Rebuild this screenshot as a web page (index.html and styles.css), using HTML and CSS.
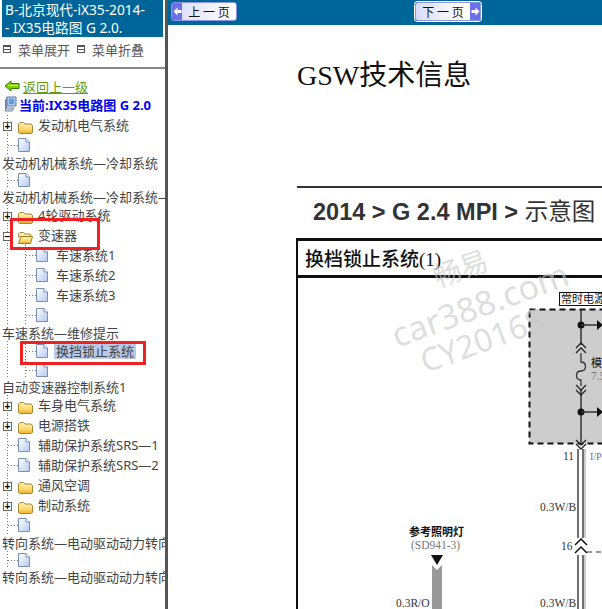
FILE: index.html
```html
<!DOCTYPE html>
<html lang="zh-CN">
<head>
    <meta charset="UTF-8">
    <title>IX35电路图 G 2.0</title>
    <link rel="stylesheet" href="styles.css">
</head>
<body>
    <svg class="sprite" width="0" height="0">
        <defs>
            <linearGradient id="folderfill" x1="0" y1="0" x2="0" y2="1">
                <stop offset="0" stop-color="#fff2b8"/>
                <stop offset="0.6" stop-color="#fbd96e"/>
                <stop offset="1" stop-color="#eeb030"/>
            </linearGradient>
            <linearGradient id="docfill" x1="0" y1="0" x2="1" y2="1">
                <stop offset="0" stop-color="#ffffff"/>
                <stop offset="1" stop-color="#b4caf0"/>
            </linearGradient>
        </defs>
        <symbol id="folder" viewBox="0 0 15 12">
            <path d="M0.5 2 L2 0.5 H5.5 L7 2 H13 L14.5 3.5 V10.5 L13.5 11.5 H1.5 L0.5 10.5 Z" fill="url(#folderfill)" stroke="#a98632"/>
        </symbol>
        <symbol id="folder-open" viewBox="0 0 15 12">
            <path d="M0.5 2 L2 0.5 H5.5 L7 2 H12.5 V5 H0.5 Z" fill="#fdf0b0" stroke="#a98632"/>
            <path d="M0.5 11.5 L3 4.5 H14.5 L12.5 11.5 Z" fill="url(#folderfill)" stroke="#a07c28"/>
        </symbol>
        <symbol id="doc" viewBox="0 0 12 14">
            <path d="M0.5 0.5 H8 L11.5 4 V13.5 H0.5 Z" fill="url(#docfill)" stroke="#7a8fb8"/>
            <path d="M8 0.5 V4 H11.5" fill="#fff" stroke="#7a8fb8"/>
        </symbol>
    </svg>

    <div class="page">
        <aside class="side">
            <div class="side-title">B-北京现代-iX35-2014-<br>- IX35电路图 G 2.0.</div>
            <div class="menu-tools">
                <span class="tool-icon"></span><span class="tool-text">菜单展开</span>
                <span class="tool-icon"></span><span class="tool-text">菜单折叠</span>
            </div>
            <div class="back">
                <svg class="back-icon" width="16" height="12" viewBox="0 0 16 12">
                    <path d="M1 6 L7 1 V3.5 H15 V8.5 H7 V11 Z" fill="#86d000" stroke="#2f7f00"/>
                    <path d="M4.5 5.5 H14" stroke="#e4f89a"/>
                </svg>
                <a href="#" class="back-link">返回上一级</a>
            </div>
            <div class="current">
                <svg class="current-icon" width="15" height="16" viewBox="0 0 15 16">
                    <path d="M4 1 H13 V10 H4 Z" fill="#a8c8f0" stroke="#5a7fb0"/>
                    <path d="M6 3 H11 V8 H6 Z" fill="#5f9be0"/>
                    <path d="M2 4 L4 1 V12 L2 15 Z" fill="#6b86aa"/>
                    <path d="M3 12 H11 L9 15 H2 Z" fill="#c4ccd8" stroke="#7a8799"/>
                </svg>
                <span>当前:IX35电路图 G 2.0</span>
            </div>

            <div class="tree">
                <div class="row"><span class="stem"><i class="box">+</i></span><svg class="ico-folder"><use href="#folder"/></svg><span class="label">发动机电气系统</span></div>
                <div class="row"><span class="stem elbow"></span><svg class="ico-doc"><use href="#doc"/></svg></div>
                <div class="row-text">发动机机械系统—冷却系统</div>
                <div class="row short"><span class="stem elbow"></span><svg class="ico-doc"><use href="#doc"/></svg></div>
                <div class="row-text">发动机机械系统—冷却系统—</div>
                <div class="row"><span class="stem"><i class="box">+</i></span><svg class="ico-folder"><use href="#folder"/></svg><span class="label">4轮驱动系统</span></div>
                <div class="row"><span class="stem"><i class="box">−</i></span><svg class="ico-folder"><use href="#folder-open"/></svg><span class="label">变速器</span></div>
                <div class="row"><span class="stem"></span><span class="stem elbow"></span><svg class="ico-doc"><use href="#doc"/></svg><span class="label">车速系统1</span></div>
                <div class="row"><span class="stem"></span><span class="stem elbow"></span><svg class="ico-doc"><use href="#doc"/></svg><span class="label">车速系统2</span></div>
                <div class="row"><span class="stem"></span><span class="stem elbow"></span><svg class="ico-doc"><use href="#doc"/></svg><span class="label">车速系统3</span></div>
                <div class="row"><span class="stem"></span><span class="stem elbow"></span><svg class="ico-doc"><use href="#doc"/></svg></div>
                <div class="row-text">车速系统—维修提示</div>
                <div class="row"><span class="stem"></span><span class="stem elbow"></span><svg class="ico-doc"><use href="#doc"/></svg><span class="label selected">换挡锁止系统</span></div>
                <div class="row short"><span class="stem"></span><span class="stem elbow"></span><svg class="ico-doc"><use href="#doc"/></svg></div>
                <div class="row-text">自动变速器控制系统1</div>
                <div class="row"><span class="stem"><i class="box">+</i></span><svg class="ico-folder"><use href="#folder"/></svg><span class="label">车身电气系统</span></div>
                <div class="row"><span class="stem"><i class="box">+</i></span><svg class="ico-folder"><use href="#folder"/></svg><span class="label">电源搭铁</span></div>
                <div class="row"><span class="stem elbow"></span><svg class="ico-doc"><use href="#doc"/></svg><span class="label">辅助保护系统SRS—1</span></div>
                <div class="row"><span class="stem elbow"></span><svg class="ico-doc"><use href="#doc"/></svg><span class="label">辅助保护系统SRS—2</span></div>
                <div class="row"><span class="stem"><i class="box">+</i></span><svg class="ico-folder"><use href="#folder"/></svg><span class="label">通风空调</span></div>
                <div class="row"><span class="stem"><i class="box">+</i></span><svg class="ico-folder"><use href="#folder"/></svg><span class="label">制动系统</span></div>
                <div class="row"><span class="stem elbow"></span><svg class="ico-doc"><use href="#doc"/></svg></div>
                <div class="row-text">转向系统—电动驱动动力转向系统</div>
                <div class="row short"><span class="stem elbow"></span><svg class="ico-doc"><use href="#doc"/></svg></div>
                <div class="row-text">转向系统—电动驱动动力转向系统</div>
            </div>

            <!-- red annotation boxes drawn on the screenshot -->
            <div class="mark mark-folder"></div>
            <div class="mark mark-item"></div>
        </aside>

        <main class="main">
            <div class="pager">
                <a href="#" class="page-btn prev">
                    <span class="btn-arrow"><svg width="9" height="9" viewBox="0 0 9 9"><path d="M0.5 4.5 L4.5 0.5 V3 H8.5 V6 H4.5 V8.5 Z" fill="#fff"/></svg></span>
                    <span class="btn-text">上 一 页</span>
                </a>
                <a href="#" class="page-btn next">
                    <span class="btn-text">下 一 页</span>
                    <span class="btn-arrow"><svg width="9" height="9" viewBox="0 0 9 9"><path d="M8.5 4.5 L4.5 0.5 V3 H0.5 V6 H4.5 V8.5 Z" fill="#fff"/></svg></span>
                </a>
            </div>

            <div class="doc">
                <h1 class="doc-title">GSW技术信息</h1>
                <div class="doc-rule"></div>
                <div class="doc-path">2014 &gt; G 2.4 MPI &gt; <span class="path-cn">示意图</span> :</div>
                <div class="sheet">
                    <div class="sheet-title">换档锁止系统<span class="sheet-num">(1)</span></div>
                    <svg class="diagram" width="305" height="331" viewBox="297 278 305 331">
                        <!-- fuse box -->
                        <rect x="529.5" y="309.5" width="90" height="134" fill="#cdcdcd" stroke="#111" stroke-width="2" stroke-dasharray="6 4"/>
                        <rect x="559.5" y="292.5" width="60" height="13" fill="#fff" stroke="#111"/>
                        <text x="561" y="303" class="d-cn">常时电源</text>
                        <path d="M581 310 V345 M581 390 V442" stroke="#333" stroke-width="1.5" fill="none"/>
                        <circle cx="581" cy="325" r="3.5" fill="#111"/>
                        <circle cx="581" cy="412" r="3.5" fill="#111"/>
                        <path d="M581 325 H597 M581 412 H597" stroke="#333" stroke-width="1.5"/>
                        <path d="M597 320 L603 325 L597 330 Z M597 407 L603 412 L597 417 Z" fill="#111"/>
                        <path d="M576 348 L581 343 L586 348 M576 353 L581 348 L586 353" stroke="#222" stroke-width="1.3" fill="none"/>
                        <path d="M581 353 V362 C587 362 587 371 581 371 C575 371 575 380 581 380 V386" stroke="#333" stroke-width="1.3" fill="none"/>
                        <path d="M576 385 L581 390 L586 385 M576 390 L581 395 L586 390" stroke="#222" stroke-width="1.3" fill="none"/>
                        <text x="591" y="367" class="d-cn">模</text>
                        <text x="591" y="380" class="d-num d-grey">7.5</text>
                        <path d="M576 440 L581 445 L586 440 M576 444 L581 449 L586 444" stroke="#222" stroke-width="1.3" fill="none"/>
                        <!-- wire down -->
                        <path d="M578 449 V538 M583 449 V538 M578 555 V609 M583 555 V609" stroke="#111" stroke-width="1.2"/>
                        <path d="M585 449 V538 M585 555 V609" stroke="#aaa" stroke-width="1.2"/>
                        <path d="M575 545 L581 539 L587 545 M575 553 L581 547 L587 553" stroke="#111" stroke-width="1.5" fill="none"/>
                        <path d="M587 552 H602" stroke="#333" stroke-dasharray="5 4"/>
                        <text x="563" y="460" class="d-num">11</text>
                        <text x="590" y="460" class="d-small d-grey">I/P</text>
                        <text x="540" y="511" class="d-num">0.3W/B</text>
                        <text x="561" y="550" class="d-num">16</text>
                        <text x="540" y="607" class="d-num">0.3W/B</text>
                        <!-- reference lamp -->
                        <text x="409" y="536" class="d-cn d-bold">参考照明灯</text>
                        <text x="411" y="549" class="d-num d-grey">(SD941-3)</text>
                        <path d="M431 555 H443 L437 565 Z" fill="#111"/>
                        <path d="M432 565 L437 570 L442 565 V609 H432 Z" fill="#999"/>
                        <text x="396" y="607" class="d-num">0.3R/O</text>
                    </svg>
                </div>
            </div>

            <!-- watermark lies over the drawing -->
            <div class="wm wm-1">畅易</div>
            <div class="wm wm-2">car388.com</div>
            <div class="wm wm-3">CY2016S</div>
        </main>
    </div>
</body>
</html>
```

FILE: styles.css
```css
html, body {
    margin: 0;
    padding: 0;
    width: 100%;
    height: 100%;
    background-color: #fff;
    overflow: hidden;
}

body {
    font-family: "Noto Sans", "Noto Sans CJK SC", sans-serif;
    font-size: 13px;
    color: #444;
}

.sprite {
    position: absolute;
}

.page {
    display: flex;
    height: 609px;
}

/* left tree */
.side {
    position: relative;
    width: 165px;
    flex: none;
    overflow: hidden;
    background-color: #fff;
}

.side-title {
    margin: 0 2px;
    height: 37px;
    padding: 1px 0 0 3px;
    box-sizing: border-box;
    background-color: #006699;
    color: #fff;
    font-size: 13.7px;
    line-height: 18px;
    white-space: nowrap;
    overflow: hidden;
}

.menu-tools {
    display: flex;
    align-items: center;
    height: 32px;
    padding: 0 0 6px 3px;
    box-sizing: border-box;
    border-bottom: 2px solid #8a8a8a;
}

.tool-icon {
    width: 6px;
    height: 6px;
    border: 1px solid #555;
    background: linear-gradient(#555 0 1px, #fff 1px 3px, #555 3px 4px, #fff 4px);
}

.tool-text {
    margin: 0 7px 0 7px;
    color: #555;
}

.back {
    display: flex;
    align-items: center;
    height: 18px;
    margin-top: 8px;
    padding-left: 4px;
}

.back-icon {
    margin-right: 3px;
}

.back-link {
    color: #5f9e10;
}

.current {
    display: flex;
    align-items: center;
    height: 18px;
    padding-left: 3px;
    color: #0000ee;
    font-weight: bold;
    white-space: nowrap;
}

.current-icon {
    margin-right: 1px;
}

.tree {
    margin-top: 2px;
    white-space: nowrap;
}

.row {
    display: flex;
    align-items: center;
    height: 20px;
}

.row.short {
    height: 18px;
}

.row-text {
    height: 16px;
    line-height: 16px;
    padding-left: 2px;
}

.stem {
    position: relative;
    display: block;
    width: 18px;
    flex: none;
    align-self: stretch;
    background: repeating-linear-gradient(to bottom, #777 0 1px, transparent 1px 3px) 7px 0 / 1px 100% no-repeat;
}

.elbow {
    background:
        repeating-linear-gradient(to right, #777 0 1px, transparent 1px 3px) 8px 50% / 10px 1px no-repeat,
        repeating-linear-gradient(to bottom, #777 0 1px, transparent 1px 3px) 7px 0 / 1px 100% no-repeat;
}

.box {
    position: absolute;
    left: 3px;
    top: 7px;
    width: 7px;
    height: 7px;
    border: 1px solid #666;
    background-color: #fff;
    color: #000;
    font: bold 10px/7px "Liberation Sans", sans-serif;
    font-style: normal;
    text-align: center;
}

.ico-folder {
    width: 15px;
    height: 12px;
    flex: none;
    margin-top: 6px;
}

.ico-doc {
    width: 12px;
    height: 14px;
    flex: none;
}

.label {
    margin-left: 5px;
    margin-top: -2px;
}

.ico-doc + .label {
    margin-left: 8px;
}

.selected {
    margin-left: 6px !important;
    margin-top: 0;
    padding: 0 2px;
    line-height: 16px;
    background-color: #b9c9e8;
}

.mark {
    position: absolute;
    box-sizing: border-box;
    border: 3px solid #ee2222;
}

.mark-folder {
    left: 10px;
    top: 218px;
    width: 90px;
    height: 32px;
}

.mark-item {
    left: 20px;
    top: 341px;
    width: 126px;
    height: 24px;
}

/* right page */
.main {
    position: relative;
    flex: 1;
    overflow: hidden;
    border-left: 3px solid #555;
}

.pager {
    display: flex;
    justify-content: space-between;
    height: 25px;
    padding: 2px 121px 0 3px;
    box-sizing: border-box;
    background-color: #006699;
}

.page-btn {
    display: flex;
    width: 66px;
    height: 19px;
    box-sizing: border-box;
    border: 1px solid #8f96e8;
    border-radius: 3px;
    background: linear-gradient(to right, #d8dcfa, #fff);
    color: #111;
    font: 12px/17px "Noto Sans CJK SC", sans-serif;
    text-decoration: none;
}

.page-btn.next {
    background: linear-gradient(to right, #d8dcfa, #fff 70%);
    box-shadow: 0 0 0 1px #fff;
}

.btn-arrow {
    display: flex;
    align-items: center;
    justify-content: center;
    width: 10px;
    flex: none;
    background-color: #6a70e8;
}

.btn-text {
    flex: 1;
    text-align: center;
    white-space: nowrap;
}

.doc {
    margin-left: 129px;
    width: 500px;
}

.doc-title {
    margin: 33px 0 0;
    height: 36px;
    color: #111;
    font: normal 28px/36px "Liberation Serif", "Noto Sans CJK SC", serif;
    white-space: nowrap;
}

.doc-rule {
    margin-top: 92px;
    height: 2px;
    background-color: #333;
}

.doc-path {
    height: 50px;
    padding-left: 16px;
    box-sizing: border-box;
    color: #333;
    font: bold 23.5px/48px "Liberation Sans", "Noto Sans CJK SC", sans-serif;
    white-space: nowrap;
}

.path-cn {
    font-weight: normal;
}

.sheet {
    margin-left: -1px;
    border-top: 3px solid #111;
    border-left: 2px solid #111;
}

.sheet-title {
    height: 37px;
    padding-left: 7px;
    box-sizing: border-box;
    border-bottom: 3px solid #111;
    color: #111;
    font: 500 19px/34px "Noto Sans CJK SC", sans-serif;
}

.sheet-num {
    font-family: "Liberation Serif", serif;
    font-weight: normal;
}

.diagram {
    display: block;
    margin-left: -1px;
    font-family: "Liberation Serif", serif;
}

.d-cn {
    font: 11px "Noto Sans CJK SC", sans-serif;
    fill: #111;
}

.d-bold {
    font-weight: 700;
}

.d-num {
    font-size: 11.5px;
    fill: #333;
}

.d-small {
    font-size: 10px;
    fill: #333;
}

.d-grey {
    fill: #777;
}

.wm {
    position: absolute;
    color: rgba(200, 200, 200, 0.6);
    white-space: nowrap;
    transform: rotate(-20deg);
    transform-origin: center;
    font-family: "Noto Sans", "Noto Sans CJK SC", sans-serif;
}

.wm-1 {
    left: 264px;
    top: 247px;
    font-size: 28px;
}

.wm-2 {
    left: 219px;
    top: 281px;
    font-size: 34px;
}

.wm-3 {
    left: 249px;
    top: 318px;
    font-size: 32px;
}
```
